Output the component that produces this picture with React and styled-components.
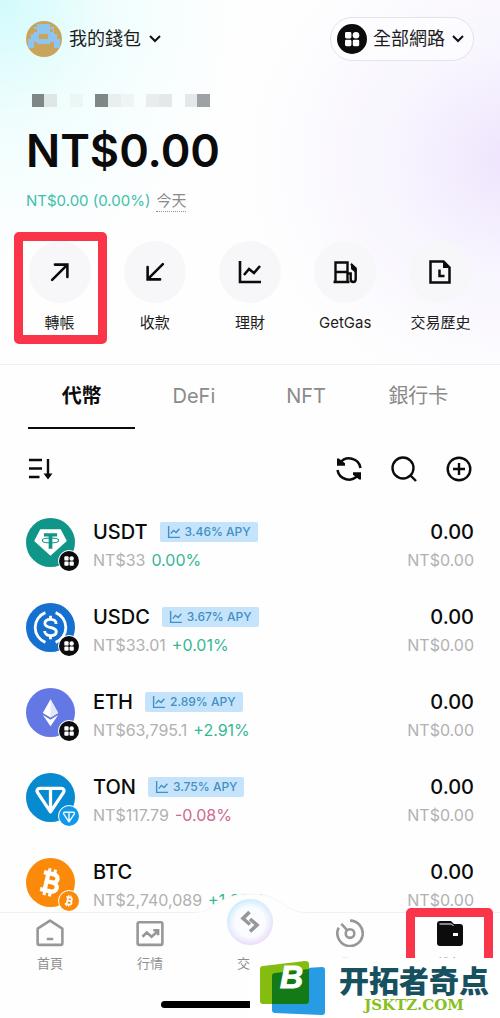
import React from 'react'
import styled, { createGlobalStyle } from 'styled-components'

const GlobalStyle = createGlobalStyle`
    * {
        box-sizing: border-box;
    }
    body {
        margin: 0;
        background: #fefefe;
        font-family: Inter, 'Noto Sans CJK TC', sans-serif;
        color: #0b0b0b;
    }
    button {
        margin: 0;
        padding: 0;
        border: 0;
        background: none;
        font: inherit;
        color: inherit;
        cursor: pointer;
    }
    svg {
        display: block;
        flex: none;
    }
`;

const Screen = styled.div`
    position: relative;
    display: flex;
    flex-direction: column;
    height: 100vh;
    overflow: hidden;
`;

const Header = styled.header`
    padding: 17px 0 30px;
    border-bottom: 1px solid #efeff1;
    background:
        radial-gradient(ellipse 240px 270px at 0 0, #d2fbfc 0%, rgba(232, 253, 253, 0.6) 45%, rgba(255, 255, 255, 0) 100%),
        radial-gradient(ellipse 270px 240px at 103% 44%, #eee4fd 0%, rgba(245, 241, 254, 0.7) 45%, rgba(255, 255, 255, 0) 100%),
        #fefefe;
`;

const TopBar = styled.div`
    display: flex;
    align-items: center;
    justify-content: space-between;
    height: 44px;
    padding: 0 26px;
`;

const WalletButton = styled.button`
    display: flex;
    align-items: center;
    gap: 7px;
    font-size: 18px;
    line-height: 26px;
    color: #1c1c1c;
`;

const NetworkButton = styled(WalletButton)`
    gap: 6px;
    height: 44px;
    padding: 0 8px 0 6px;
    border: 1px solid #e4e2ea;
    border-radius: 22px;
    background: rgba(255, 255, 255, 0.5);
`;

const Balance = styled.section`
    padding: 33px 26px 0;
`;

const Amount = styled.h1`
    margin: 16px 0 10px;
    font-size: 45px;
    line-height: 56px;
    font-weight: 600;
`;

const Change = styled.p`
    display: flex;
    align-items: center;
    gap: 6px;
    margin: 0;
    font-size: 15px;
    line-height: 23px;
    color: #3fc0ac;
`;

const Period = styled.button`
    border-bottom: 1px dotted #8e8e8e;
    line-height: 21px;
    color: #8a8a8a;
`;

const Actions = styled.nav`
    display: grid;
    grid-template-columns: repeat(5, 1fr);
    padding: 29px 12px 0;
`;

const ActionButton = styled.button`
    position: relative;
    display: flex;
    flex-direction: column;
    align-items: center;
    gap: 9px;
    font-size: 15px;
    line-height: 22px;
    white-space: nowrap;
    color: #1c1c1c;
`;

const ActionCircle = styled.span`
    display: flex;
    align-items: center;
    justify-content: center;
    width: 62px;
    height: 62px;
    border-radius: 50%;
    background: #f7f7f9;
    color: #0b0b0b;
`;

const Highlight = styled.span`
    position: absolute;
    inset: ${props => props.$inset};
    border: 9px solid #fa3449;
    border-radius: 5px;
    pointer-events: none;
`;

const Tabs = styled.div`
    display: grid;
    grid-template-columns: repeat(4, 1fr);
    gap: 5px;
    height: 64px;
    padding: 0 28px;
`;

const Tab = styled.button`
    border-bottom: 2px solid ${props => (props.$active ? '#0b0b0b' : 'transparent')};
    font-size: 20px;
    line-height: 28px;
    font-weight: ${props => (props.$active ? 600 : 400)};
    color: ${props => (props.$active ? '#0b0b0b' : '#8b8b8b')};
`;

const Toolbar = styled.div`
    display: flex;
    align-items: center;
    gap: 29px;
    height: 80px;
    padding: 0 28px;
`;

const ToolButton = styled.button`
    margin-right: ${props => (props.$push ? 'auto' : '0')};
`;

const TokenList = styled.ul`
    flex: 1;
    min-height: 0;
    margin: 0;
    padding: 0 26px;
    overflow: hidden;
    list-style: none;
`;

const TokenRow = styled.li`
    display: flex;
    gap: 18px;
    padding: 9px 0 20px;
`;

const TokenIcon = styled.div`
    position: relative;
    width: 49px;
    height: 49px;
`;

const ChainBadge = styled.span`
    position: absolute;
    right: -5px;
    bottom: -5px;
    border: 1px solid #fff;
    border-radius: 50%;
    background: #fff;
`;

const TokenInfo = styled.div`
    flex: 1;
`;

const TokenName = styled.div`
    display: flex;
    align-items: center;
    gap: 12px;
    font-size: 20px;
    line-height: 28px;
    font-weight: 500;
`;

const Apy = styled.span`
    display: flex;
    align-items: center;
    gap: 4px;
    height: 20px;
    padding: 0 7px;
    border-radius: 2px;
    background: #c6e3fc;
    font-size: 12px;
    line-height: 20px;
    color: #4090c2;
`;

const TokenPrice = styled.div`
    display: flex;
    gap: 6px;
    font-size: 16px;
    line-height: 28px;
    color: #b1b1b1;
`;

const Percent = styled.span`
    color: ${props => (props.$down ? '#d0678f' : '#36b795')};
`;

const Holding = styled.div`
    text-align: right;
    font-size: 20px;
    line-height: 28px;
    font-weight: 500;
`;

const HoldingValue = styled.div`
    font-size: 16px;
    font-weight: 400;
    color: #b1b1b1;
`;

const BottomNav = styled.nav`
    position: relative;
    display: grid;
    grid-template-columns: repeat(5, 1fr);
    align-items: start;
    height: 106px;
    border-top: 1px solid #f0f0f0;
    background: #fefefe;
`;

const Hump = styled.svg`
    position: absolute;
    top: -21px;
    left: 50%;
    margin-left: -55px;
`;

const NavButton = styled.button`
    position: relative;
    display: flex;
    flex-direction: column;
    align-items: center;
    padding-top: 6px;
    gap: 6px;
    font-size: 13px;
    line-height: 20px;
    color: #8f8f8f;
`;

const SwapCircle = styled.span`
    display: flex;
    align-items: center;
    justify-content: center;
    width: 46px;
    height: 46px;
    margin: -20px 0 2px;
    border-radius: 50%;
    background: radial-gradient(circle at 50% 50%, #fbfcff 45%, rgba(255, 255, 255, 0) 75%), linear-gradient(160deg, #b5eef8, #dbe6fb 50%, #ecd0f6);
`;

const HomeIndicator = styled.span`
    position: absolute;
    left: 50%;
    bottom: 10px;
    width: 178px;
    height: 7px;
    margin-left: -89px;
    border-radius: 4px;
    background: #000;
`;

const Watermark = styled.div`
    position: absolute;
    right: 0;
    bottom: 0;
    display: flex;
    align-items: center;
    gap: 13px;
    width: 250px;
    height: 60px;
    padding-left: 10px;
    background: #fff;
`;

const WatermarkText = styled.div`
    text-align: center;
    font-family: 'Noto Sans CJK SC', sans-serif;
    font-size: 30px;
    line-height: 34px;
    font-weight: 900;
    color: #17505f;
`;

const WatermarkSite = styled.div`
    font-family: 'DejaVu Serif', serif;
    font-size: 15px;
    line-height: 18px;
    font-weight: 700;
    color: #86c01c;
`;

const Line = ({ size = 26, width = 2.4, color = 'currentColor', children }) => (
    <svg width={size} height={size} viewBox="0 0 26 26" fill="none" stroke={color} strokeWidth={width} aria-hidden="true">
        {children}
    </svg>
)

const Chevron = () => (
    <svg width="14" height="10" viewBox="0 0 14 10" fill="none" stroke="#111" strokeWidth="2" aria-hidden="true">
        <path d="M2 2l5 5 5-5" />
    </svg>
)

const Avatar = () => (
    <svg width="36" height="36" viewBox="0 0 36 36" aria-hidden="true">
        <clipPath id="avatar"><circle cx="18" cy="18" r="18" /></clipPath>
        <g clipPath="url(#avatar)">
            <path fill="#c9a45c" d="M0 0h36v36H0z" />
            <path fill="#8fc4ee" d="M11 3h13v3h4v7h3v5h3v9h-6v-6h-4v2H11v-2H8v6H2v-9h3v-5h3V6h3z" />
            <path fill="#c9a45c" d="M13 13h9v5h-9zM8 8h3v3H8zM24 8h3v3h-3z" />
        </g>
    </svg>
)

// blurred-out address, one square per cell
const mask = ['#7f8786', '#dfe7e6', '', '#ebf7f5', '', '#7f8786', '#e8efef', '#eff5f5', '', '#e9edf0', '#e3e8ea', '', '#e5e8e9', '#9ea2a4']

const MaskedAddress = () => (
    <svg width="184" height="13" viewBox="0 0 184 13" shapeRendering="crispEdges" aria-hidden="true">
        {mask.map((fill, i) => fill && (
            <rect key={i} x={5.6 + i * 12.75} y="0" width="12.75" height="13" fill={fill} />
        ))}
    </svg>
)

const NetworkIcon = ({ size }) => (
    <svg width={size} height={size} viewBox="0 0 30 30" aria-hidden="true">
        <circle cx="15" cy="15" r="15" fill="#0c0c0c" />
        <g fill="#fff">
            <rect x="8" y="8" width="6.4" height="6.4" rx="1.4" />
            <circle cx="19" cy="11.2" r="3.3" />
            <rect x="8" y="15.8" width="6.4" height="6.4" rx="1.4" />
            <rect x="15.8" y="15.8" width="6.4" height="6.4" rx="1.4" />
        </g>
    </svg>
)

const ChartIcon = ({ size, width }) => (
    <Line size={size} width={width}>
        <path d="M3 2v21h21M7 16l5-6 5 4 6-7" />
    </Line>
)

const UsdtIcon = () => (
    <svg width="49" height="49" viewBox="0 0 48 48" aria-hidden="true">
        <circle cx="24" cy="24" r="24" fill="#0f9688" />
        <path fill="#fff" d="M14 11h20l6 11.500L24 37 8 22.500z" />
        <path fill="#0f9688" d="M17.500 15h13v3.200h-4.700V30h-3.600V18.200h-4.700z" />
        <ellipse cx="24" cy="22" rx="8" ry="2.300" fill="none" stroke="#0f9688" strokeWidth="1" />
    </svg>
)

const UsdcIcon = () => (
    <svg width="49" height="49" viewBox="0 0 48 48" fill="none" stroke="#fff" strokeWidth="2.800" aria-hidden="true">
        <circle cx="24" cy="24" r="24" fill="#1670cf" stroke="none" />
        <path d="M19 9.500a15.500 15.500 0 0 0 0 29M29 9.500a15.500 15.500 0 0 1 0 29" />
        <path d="M29.500 20.500c0-2.800-2.200-4.500-5.500-4.500s-5.500 1.500-5.500 4c0 5.500 11.200 2.500 11.200 8 0 2.500-2.400 4-5.700 4s-5.700-1.800-5.700-4.500M24 12.500V16M24 32v3.500" />
    </svg>
)

const EthIcon = () => (
    <svg width="49" height="49" viewBox="0 0 48 48" aria-hidden="true">
        <circle cx="24" cy="24" r="24" fill="#6378e4" />
        <path fill="#fff" d="M24 11l-7.500 13.500L24 29l7.500-4.500z" />
        <path fill="#e3e7fb" d="M24 11v18l7.500-4.500z" />
        <path fill="#fff" d="M16.500 26.500L24 31l7.500-4.500L24 37.500z" />
    </svg>
)

const TonIcon = ({ size = 49, color = '#078ad0' }) => (
    <svg width={size} height={size} viewBox="0 0 48 48" fill="none" stroke="#fff" strokeWidth="3.200" strokeLinejoin="round" aria-hidden="true">
        <circle cx="24" cy="24" r="24" fill={color} stroke="none" />
        <path d="M13.500 15h21c2.400 0 3.300 2 2.300 4L24 38 11.200 19c-1-2 0-4 2.300-4zM24 15v22" />
    </svg>
)

const BtcIcon = ({ size = 49 }) => (
    <svg width={size} height={size} viewBox="0 0 48 48" aria-hidden="true">
        <circle cx="24" cy="24" r="24" fill="#fb8a0a" />
        <g transform="rotate(13 24 24)" fill="none" stroke="#fff" strokeWidth="4.200">
            <path d="M15.500 15.500h10c6 0 6 8 0 8H20M25.500 23.500c7.500 0 7.500 9 0 9h-10M20 15v18" />
            <path strokeWidth="3" d="M20.500 10.500V15M26 10.500V15M20.500 33v4.500M26 33v4.500" />
        </g>
    </svg>
)

const actions = [
    { label: '轉帳', marked: true, icon: <Line size={24} width="2.8"><path d="M4.500 21.500L20.500 5.500M7.500 5h13.500v13.500" strokeLinecap="round" /></Line> },
    { label: '收款', icon: <Line size={24} width="2.8"><path d="M21.500 4.500L5.500 20.500M5 7.500V21h13.500" strokeLinecap="round" /></Line> },
    { label: '理財', icon: <ChartIcon size={26} width={2.6} /> },
    {
        label: 'GetGas',
        icon: (
            <Line width="2.4">
                <path d="M3.500 23V3.500h12V23M1.500 23h16M3.500 13h12M15.500 14.500h3.200V20c0 4 5 4 5 0V9.500L19 5" />
                <path d="M19 4l5 5v5l-5-4z" fill="currentColor" stroke="none" />
            </Line>
        ),
    },
    {
        label: '交易歷史',
        icon: (
            <Line width="2.5">
                <path d="M3.500 2.500h13l6 6v15h-19zM12.500 10.500V17h5" />
                <path d="M16 2l7 7h-7z" fill="currentColor" stroke="none" />
            </Line>
        ),
    },
]

const tabs = ['代幣', 'DeFi', 'NFT', '銀行卡']

const tokens = [
    { name: 'USDT', apy: '3.46% APY', price: 'NT$33', percent: '0.00%', icon: <UsdtIcon />, chain: <NetworkIcon size={20} /> },
    { name: 'USDC', apy: '3.67% APY', price: 'NT$33.01', percent: '+0.01%', icon: <UsdcIcon />, chain: <NetworkIcon size={20} /> },
    { name: 'ETH', apy: '2.89% APY', price: 'NT$63,795.1', percent: '+2.91%', icon: <EthIcon />, chain: <NetworkIcon size={20} /> },
    { name: 'TON', apy: '3.75% APY', price: 'NT$117.79', percent: '-0.08%', down: true, icon: <TonIcon />, chain: <TonIcon size={20} color="#109bea" /> },
    { name: 'BTC', price: 'NT$2,740,089', percent: '+1.26%', icon: <BtcIcon />, chain: <BtcIcon size={20} /> },
]

const App = () => (
    <Screen>
        <GlobalStyle />
        <Header>
            <TopBar>
                <WalletButton>
                    <Avatar />
                    我的錢包
                    <Chevron />
                </WalletButton>
                <NetworkButton>
                    <NetworkIcon size={30} />
                    全部網路
                    <Chevron />
                </NetworkButton>
            </TopBar>
            <Balance>
                <MaskedAddress />
                <Amount>NT$0.00</Amount>
                <Change>
                    NT$0.00 (0.00%)
                    <Period>今天</Period>
                </Change>
            </Balance>
            <Actions>
                {actions.map(action => (
                    <ActionButton key={action.label}>
                        <ActionCircle>{action.icon}</ActionCircle>
                        {action.label}
                        {action.marked && <Highlight $inset="-9px 0 -10px 2px" />}
                    </ActionButton>
                ))}
            </Actions>
        </Header>

        <Tabs>
            {tabs.map((tab, i) => (
                <Tab key={tab} $active={i === 0}>{tab}</Tab>
            ))}
        </Tabs>

        <Toolbar>
            <ToolButton $push aria-label="排序">
                <Line>
                    <path d="M1 4h13M1 12.500h13M1 21h10.500M20 3v18" />
                    <path d="M15.500 17.500h9L20 23.500z" fill="currentColor" stroke="none" />
                </Line>
            </ToolButton>
            <ToolButton aria-label="重新整理">
                <Line width="2.5">
                    <path d="M24.500 12A11.500 11.500 0 0 0 4 7M1.500 14A11.500 11.500 0 0 0 22 19" />
                    <path d="M1 2.500l1.800 0L9 7.200V9.800H1zM25 23.500h-1.800L17 18.800v-2.600h8z" fill="currentColor" stroke="none" />
                </Line>
            </ToolButton>
            <ToolButton aria-label="搜尋">
                <Line><circle cx="12" cy="12" r="10.500" /><path d="M19 19l6 6" /></Line>
            </ToolButton>
            <ToolButton aria-label="新增">
                <Line><circle cx="13" cy="13" r="11.300" /><path d="M13 7v12M7 13h12" /></Line>
            </ToolButton>
        </Toolbar>

        <TokenList>
            {tokens.map(token => (
                <TokenRow key={token.name}>
                    <TokenIcon>
                        {token.icon}
                        <ChainBadge>{token.chain}</ChainBadge>
                    </TokenIcon>
                    <TokenInfo>
                        <TokenName>
                            {token.name}
                            {token.apy && <Apy><ChartIcon size={14} width={2.6} />{token.apy}</Apy>}
                        </TokenName>
                        <TokenPrice>
                            {token.price}
                            <Percent $down={token.down}>{token.percent}</Percent>
                        </TokenPrice>
                    </TokenInfo>
                    <Holding>
                        0.00
                        <HoldingValue>NT$0.00</HoldingValue>
                    </Holding>
                </TokenRow>
            ))}
        </TokenList>

        <BottomNav>
            <Hump width="110" height="30" viewBox="0 0 110 30" aria-hidden="true">
                <path d="M0 20.500C22 20 22 2 55 2s33 18 55 18.500V30H0z" fill="#fefefe" />
                <path d="M0 20.500C22 20 22 2 55 2s33 18 55 18.500" fill="none" stroke="#f5f5f5" />
            </Hump>
            <NavButton>
                <Line size={28} color="#979797">
                    <path d="M1.500 9L13 1.500 24.500 9v13.500c0 1-.5 1.500-1.500 1.500H3c-1 0-1.500-.5-1.500-1.500zM10 18.500h6" strokeLinejoin="round" />
                </Line>
                首頁
            </NavButton>
            <NavButton>
                <Line size={28} color="#979797">
                    <rect x="1.500" y="3" width="23" height="21" rx="1.500" />
                    <path d="M6 16.500l4-4 4.500 4L20.500 11M16 10.500h4.500V15" />
                </Line>
                行情
            </NavButton>
            <NavButton>
                <SwapCircle>
                    <svg width="22" height="24" viewBox="0 0 22 24" fill="none" stroke="#979797" strokeWidth="3.600" aria-hidden="true">
                        <path d="M10.500 2L4 8.500l7 6" />
                        <path d="M11 9l7 6-7 6.500" />
                    </svg>
                </SwapCircle>
                交易
            </NavButton>
            <NavButton>
                <Line size={28} color="#979797">
                    <path d="M13 1.500A11.800 11.800 0 1 1 2.500 8M5 4.500l5.500 6" />
                    <circle cx="13" cy="13.500" r="4" />
                </Line>
                發現
            </NavButton>
            <NavButton>
                <svg width="28" height="28" viewBox="0 0 28 28" aria-hidden="true">
                    <path fill="#0c0c0c" d="M4 2h11l3 3h6a3 3 0 0 1 3 3v16a3 3 0 0 1-3 3H4a3 3 0 0 1-3-3V5a3 3 0 0 1 3-3z" />
                    <path fill="none" stroke="#fff" strokeWidth="1" d="M3.500 5h12l2 2" />
                    <rect x="17" y="14" width="5" height="3" fill="#fff" />
                </svg>
                錢包
                <Highlight $inset="-5px 7px -10px 6px" />
            </NavButton>
            <HomeIndicator />
        </BottomNav>

        <Watermark>
            <svg width="66" height="56" viewBox="0 0 66 56" aria-hidden="true">
                <path fill="#279be3" d="M15 10l47-3c2 0 3 1 3 3v42c0 2-1 3-3 3l-47-2c-2 0-3-1-3-3V13c0-2 1-3 3-3z" />
                <path fill="#84bd10" d="M3 6l42-5c3 0 4 1 4 3v37c0 2-1 3-3 3H3c-2 0-3-1-3-3V9c0-2 1-3 3-3z" />
                <path fill="#147a17" d="M15 13l34-4v32c0 2-1 3-3 3H12V16c0-2 1-3 3-3z" />
                <text x="20" y="28" fill="#fff" fontFamily="Liberation Sans" fontSize="32" fontWeight="700" fontStyle="italic" stroke="#fff">B</text>
            </svg>
            <WatermarkText>
                开拓者奇点
                <WatermarkSite>JSKTZ.COM</WatermarkSite>
            </WatermarkText>
        </Watermark>
    </Screen>
)

export default App
